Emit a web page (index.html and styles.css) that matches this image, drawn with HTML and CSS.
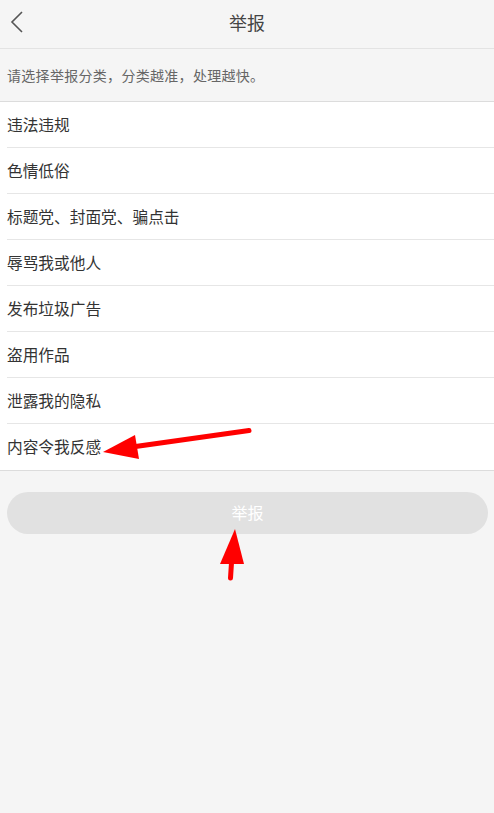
FILE: index.html
```html
<!DOCTYPE html>
<html lang="zh">
<head>
<meta charset="utf-8">
<title>举报</title>
<link rel="stylesheet" href="styles.css">
</head>
<body>
<div class="page">
  <header class="topbar">
    <span class="back">
      <svg width="14" height="24" viewBox="0 0 14 24"><path d="M12 2 L2 12 L12 22" fill="none" stroke="#555" stroke-width="1.6"/></svg>
    </span>
    <h1 class="title">举报</h1>
  </header>
  <p class="hint">请选择举报分类，分类越准，处理越快。</p>
  <ul class="list">
    <li class="item">违法违规</li>
    <li class="item">色情低俗</li>
    <li class="item">标题党、封面党、骗点击</li>
    <li class="item">辱骂我或他人</li>
    <li class="item">发布垃圾广告</li>
    <li class="item">盗用作品</li>
    <li class="item">泄露我的隐私</li>
    <li class="item">内容令我反感</li>
  </ul>
  <div class="actions">
    <button class="submit">举报</button>
  </div>
  <svg class="marks" width="494" height="813" viewBox="0 0 494 813">
    <line x1="249" y1="430.5" x2="132" y2="447" stroke="#f00" stroke-width="5" stroke-linecap="round"/>
    <polygon points="103,452 135,435 139,459" fill="#f00"/>
    <line x1="230.5" y1="578" x2="232" y2="555" stroke="#f00" stroke-width="5" stroke-linecap="round"/>
    <polygon points="235,529 220,564 244,564" fill="#f00"/>
  </svg>
</div>
</body>
</html>
```

FILE: styles.css
```css
* { box-sizing: border-box; }
html, body { margin: 0; padding: 0; }
body {
  background: #f5f5f5;
  font-family: "Noto Sans CJK SC", "Noto Sans", sans-serif;
  color: #333;
}
.page {
  position: relative;
  width: 494px;
  min-height: 813px;
}
.topbar {
  height: 49px;
  border-bottom: 1px solid #e3e3e3;
  display: flex;
  align-items: center;
  justify-content: center;
  position: relative;
}
.back {
  position: absolute;
  left: 10px;
  top: 10px;
  display: flex;
}
.title {
  margin: 0;
  font-size: 18px;
  font-weight: normal;
  color: #444;
  line-height: 1;
  margin-top: -5px;
}
.hint {
  margin: 0;
  height: 53px;
  padding-left: 7px;
  display: flex;
  align-items: center;
  font-size: 14px;
  letter-spacing: 0.3px;
  color: #666;
  border-bottom: 1px solid #dcdcdc;
}
.list {
  list-style: none;
  margin: 0;
  padding: 0 0 0 7px;
  background: #fff;
  border-bottom: 1px solid #dcdcdc;
}
.item {
  height: 46px;
  display: flex;
  align-items: center;
  font-size: 15.7px;
  color: #333;
  border-bottom: 1px solid #e6e6e6;
  padding-bottom: 1px;
}
.item:last-child { border-bottom: none; height: 46px; }
.actions {
  padding: 21px 6px 0 7px;
}
.submit {
  width: 100%;
  height: 42px;
  border: none;
  border-radius: 21px;
  background: #e1e1e1;
  color: #fff;
  font-family: inherit;
  font-size: 16px;
  padding: 0 0 3px;
}
.marks {
  position: absolute;
  left: 0;
  top: 0;
  pointer-events: none;
}
```
